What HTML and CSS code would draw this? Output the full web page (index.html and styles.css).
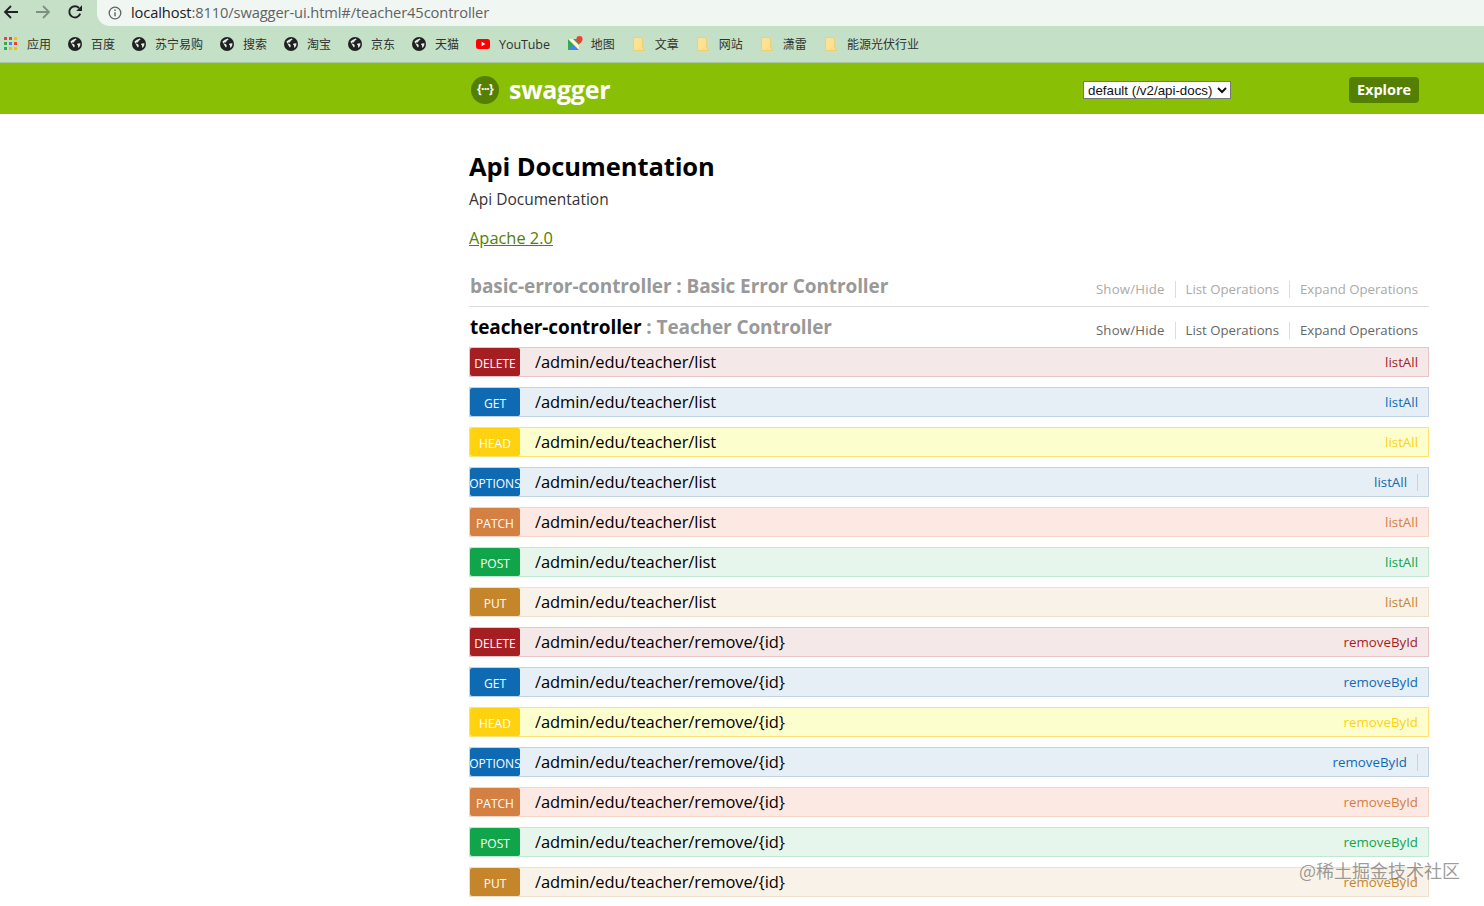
FILE: index.html
```html
<!DOCTYPE html>
<html lang="zh">
<head>
<meta charset="utf-8">
<title>Swagger UI</title>
<link rel="stylesheet" href="styles.css">
</head>
<body>
<svg class="defs" width="0" height="0" aria-hidden="true">
  <symbol id="globe" viewBox="0 0 14 14">
    <circle cx="7" cy="7" r="7" fill="#1f2120"/>
    <path d="M2.400 4.400 4.800 2.800 7.800 1.600 8.600 2.600 6.800 3.800 5.800 5.400 4 5.400 3.800 6.600 5.800 7 6.800 8.400 6.200 10.400 5.400 10 4.400 8.200Z" fill="#e4ece5"/>
    <path d="M9.600 6.400 12.400 6.200 12.300 8.200 11 10.600 10.200 10.800 10 8.600 9 7.400Z" fill="#e4ece5"/>
  </symbol>
  <symbol id="folder" viewBox="0 0 14 14">
    <path d="M1.500.5H10L11 12 12.500 13.500H1.500Z" fill="#fde293" stroke="#f2cf6c"/>
  </symbol>
</svg>

<div class="toolbar">
  <div class="nav">
    <svg class="nav-icon" viewBox="0 0 16 16"><path d="M15 8H2M8 2 2 8l6 6" fill="none" stroke="#202124" stroke-width="1.8"/></svg>
    <svg class="nav-icon" viewBox="0 0 16 16"><path d="M1 8h13M8 2l6 6-6 6" fill="none" stroke="#7f8f82" stroke-width="1.8"/></svg>
    <svg class="nav-icon" viewBox="0 0 16 16"><path d="M13.200 9.600A5.600 5.600 0 1 1 12 4" fill="none" stroke="#202124" stroke-width="1.900"/><path d="M15 1.200V7H9.200Z" fill="#202124"/></svg>
  </div>
  <div class="omnibox">
    <svg class="info" viewBox="0 0 14 14"><circle cx="7" cy="7" r="5.800" fill="none" stroke="#5f6368" stroke-width="1.300"/><path d="M7 6.200v4M7 3.600v1.400" stroke="#5f6368" stroke-width="1.400"/></svg>
    <span class="url"><span class="url-host">localhost</span>:8110/swagger-ui.html#/teacher45controller</span>
  </div>
</div>

<div class="bookmarks">
  <span class="bm">
    <svg class="bm-icon" viewBox="0 0 14 14">
      <rect width="3" height="3" x="0" y="0" fill="#ea4335"/><rect width="3" height="3" x="5" y="0" fill="#ea4335"/><rect width="3" height="3" x="10" y="0" fill="#fbbc05"/>
      <rect width="3" height="3" x="0" y="5" fill="#34a853"/><rect width="3" height="3" x="5" y="5" fill="#4285f4"/><rect width="3" height="3" x="10" y="5" fill="#ea4335"/>
      <rect width="3" height="3" x="0" y="10" fill="#34a853"/><rect width="3" height="3" x="5" y="10" fill="#fbbc05"/><rect width="3" height="3" x="10" y="10" fill="#fbbc05"/>
    </svg>应用</span>
  <span class="bm"><svg class="bm-icon"><use href="#globe"/></svg>百度</span>
  <span class="bm"><svg class="bm-icon"><use href="#globe"/></svg>苏宁易购</span>
  <span class="bm"><svg class="bm-icon"><use href="#globe"/></svg>搜索</span>
  <span class="bm"><svg class="bm-icon"><use href="#globe"/></svg>淘宝</span>
  <span class="bm"><svg class="bm-icon"><use href="#globe"/></svg>京东</span>
  <span class="bm"><svg class="bm-icon"><use href="#globe"/></svg>天猫</span>
  <span class="bm bm-yt">
    <svg class="bm-icon" viewBox="0 0 14 14"><rect y="2" width="14" height="10" rx="2.500" fill="#f00"/><path d="M5.600 4.800v4.400L9.400 7Z" fill="#fff"/></svg>YouTube</span>
  <span class="bm">
    <svg class="bm-icon maps" viewBox="0 0 16 16">
      <path d="M1 3h11v11H1Z" fill="#34a853"/>
      <path d="M1 14 7 8l5 6Z" fill="#4285f4"/>
      <path d="M1 3l11 11V9L6 3Z" fill="#fdf3d0"/>
      <path d="M12.500 0A3.200 3.200 0 0 0 9.400 3.200C9.400 5.400 12.500 8 12.500 8S15.600 5.400 15.600 3.200A3.200 3.200 0 0 0 12.500 0Z" fill="#ea4335"/>
    </svg>地图</span>
  <span class="bm"><svg class="bm-icon"><use href="#folder"/></svg>文章</span>
  <span class="bm"><svg class="bm-icon"><use href="#folder"/></svg>网站</span>
  <span class="bm"><svg class="bm-icon"><use href="#folder"/></svg>潇雷</span>
  <span class="bm"><svg class="bm-icon"><use href="#folder"/></svg>能源光伏行业</span>
</div>

<header class="swagger-header">
  <div class="swagger-inner">
    <div class="logo">
      <span class="logo-mark">{···}</span>
      <span class="logo-text">swagger</span>
    </div>
    <select class="spec-select"><option>default (/v2/api-docs)</option></select>
    <button class="explore" type="button">Explore</button>
  </div>
</header>

<main class="content">
  <h1 class="title">Api Documentation</h1>
  <p class="desc">Api Documentation</p>
  <a class="license" href="#">Apache 2.0</a>

  <section class="resource resource-closed">
    <h2 class="res-title"><span class="res-name">basic-error-controller</span> : Basic Error Controller</h2>
    <ul class="res-links"><li>Show/Hide</li><li>List Operations</li><li>Expand Operations</li></ul>
  </section>

  <section class="resource resource-open">
    <h2 class="res-title"><span class="res-name">teacher-controller</span> : Teacher Controller</h2>
    <ul class="res-links"><li>Show/Hide</li><li>List Operations</li><li>Expand Operations</li></ul>
  </section>

  <div class="ops">
    <div class="op delete"><span class="method">DELETE</span><span class="path">/admin/edu/teacher/list</span><span class="nick">listAll</span></div>
    <div class="op get"><span class="method">GET</span><span class="path">/admin/edu/teacher/list</span><span class="nick">listAll</span></div>
    <div class="op head"><span class="method">HEAD</span><span class="path">/admin/edu/teacher/list</span><span class="nick">listAll</span></div>
    <div class="op options"><span class="method">OPTIONS</span><span class="path">/admin/edu/teacher/list</span><span class="nick">listAll</span></div>
    <div class="op patch"><span class="method">PATCH</span><span class="path">/admin/edu/teacher/list</span><span class="nick">listAll</span></div>
    <div class="op post"><span class="method">POST</span><span class="path">/admin/edu/teacher/list</span><span class="nick">listAll</span></div>
    <div class="op put"><span class="method">PUT</span><span class="path">/admin/edu/teacher/list</span><span class="nick">listAll</span></div>
    <div class="op delete"><span class="method">DELETE</span><span class="path">/admin/edu/teacher/remove/{id}</span><span class="nick">removeById</span></div>
    <div class="op get"><span class="method">GET</span><span class="path">/admin/edu/teacher/remove/{id}</span><span class="nick">removeById</span></div>
    <div class="op head"><span class="method">HEAD</span><span class="path">/admin/edu/teacher/remove/{id}</span><span class="nick">removeById</span></div>
    <div class="op options"><span class="method">OPTIONS</span><span class="path">/admin/edu/teacher/remove/{id}</span><span class="nick">removeById</span></div>
    <div class="op patch"><span class="method">PATCH</span><span class="path">/admin/edu/teacher/remove/{id}</span><span class="nick">removeById</span></div>
    <div class="op post"><span class="method">POST</span><span class="path">/admin/edu/teacher/remove/{id}</span><span class="nick">removeById</span></div>
    <div class="op put"><span class="method">PUT</span><span class="path">/admin/edu/teacher/remove/{id}</span><span class="nick">removeById</span></div>
  </div>
</main>

<div class="watermark">@稀土掘金技术社区</div>
</body>
</html>
```
FILE: styles.css
```css
* { box-sizing: border-box; }
html, body { margin: 0; height: 906px; overflow: hidden; background: #fff; }
body { font-family: "Open Sans", "Noto Sans CJK SC", sans-serif; color: #000; position: relative; }
.defs { position: absolute; }

.toolbar { height: 26px; background: #c6e0c8; display: flex; }
.nav { width: 97px; display: flex; gap: 16px; padding: 4px 0 0 3px; }
.nav-icon { width: 16px; height: 16px; }
.omnibox { flex: 1; background: #f0f6f1; border-bottom-left-radius: 13px; display: flex; align-items: center; padding-left: 11px; gap: 9px; margin-top: -1px; height: 27px; }
.info { width: 14px; height: 14px; }
.url { font: 14.7px/20px "Open Sans", sans-serif; color: #5f6368; letter-spacing: -.12px; margin-top: -1px; }
.url-host { color: #202124; }

.bookmarks { height: 37px; background: #c4e0c6; border-bottom: 1px solid #a9c7a3; display: flex; align-items: center; gap: 17px; padding: 0 0 0 4px; }
.bm { display: flex; align-items: center; gap: 9px; font: 12px/16px "Noto Sans CJK SC", "Open Sans", sans-serif; color: #30332f; white-space: nowrap; }
.bm-icon { width: 14px; height: 14px; flex: none; }
.bm-yt { font: 12.5px/16px "Open Sans", sans-serif; padding-top: 2px; letter-spacing: -.1px; }
.bm-yt .bm-icon { margin-top: -2px; }
.maps { width: 16px; height: 16px; margin-right: -1px; }

.swagger-header { height: 51px; background: #89bf04; }
.swagger-inner { width: 960px; margin-left: 469px; height: 100%; display: flex; align-items: center; padding-top: 3px; }
.logo { display: flex; align-items: center; gap: 10px; width: 614px; padding-left: 2px; }
.logo-mark { width: 28px; height: 28px; border-radius: 50%; background: #547f00; color: #fff; font: 700 12px/26px "Open Sans", sans-serif; text-align: center; letter-spacing: -.7px; }
.logo-text { font: 700 25px/30px "Open Sans", sans-serif; color: #fff; letter-spacing: -.3px; margin-top: -3px; }
.spec-select { width: 148px; height: 18px; font: 13.33px "Liberation Sans", sans-serif; background: #fff; color: #111; border: 1px solid #767676; padding: 0; }
.explore { margin-left: 118px; width: 70px; height: 26px; border: 0; border-radius: 4px; background: #547f00; color: #fff; font: 700 14.5px/26px "Open Sans", sans-serif; padding: 0; }

.content { width: 960px; margin-left: 469px; }
.title { margin: 0; padding-top: 34px; font: 700 25.5px/36px "Open Sans", sans-serif; letter-spacing: -.1px; }
.desc { margin: 3px 0 0; font: 15.5px/24px "Open Sans", sans-serif; color: #333; }
.license { display: block; margin-top: 15px; font: 16.4px/24px "Open Sans", sans-serif; color: #547f00; text-decoration: underline; width: max-content; }

.resource { display: flex; align-items: flex-end; justify-content: space-between; padding: 0 11px 0 1px; }
.resource-closed { margin-top: 15px; height: 42px; padding-bottom: 6px; border-bottom: 1px solid #ddd; }
.resource-open { height: 40px; padding-bottom: 6px; }
.res-title { margin: 0; font: 700 19px/28px "Open Sans", sans-serif; color: #999; letter-spacing: -.1px; }
.resource-open .res-name { color: #000; }
.res-links { list-style: none; margin: 0 0 2px; padding: 0; display: flex; font: 13.2px/17px "Open Sans", sans-serif; color: #666; }
.resource-closed .res-links { color: #aaa; }
.res-links li { padding: 0 10px; border-right: 1px solid #ddd; }
.res-links li:first-child { letter-spacing: .2px; }
.res-links li:last-child { padding-right: 0; border-right: 0; }

.ops { display: flex; flex-direction: column; gap: 10px; }
.op { height: 30px; border: 1px solid; display: flex; align-items: center; }
.method { width: 50px; height: 28px; flex: none; border-radius: 2px; color: #fff; font: 12px/31px "Open Sans", sans-serif; text-align: center; overflow: hidden; white-space: nowrap; display: flex; justify-content: center; }
.path { margin-left: 15px; flex: 1; font: 16.5px/26px "Open Sans", sans-serif; color: #000; letter-spacing: -.08px; }
.nick { padding-right: 10px; font: 13.3px/20px "Open Sans", sans-serif; }

.delete { background: #f5e8e8; border-color: #e8c6c7; }
.delete .method { background: #a41e22; }
.delete .nick { color: #a41e22; }
.get { background: #e7eff6; border-color: #c3d5e5; }
.get .method { background: #0f6ab4; }
.get .nick { color: #0f6ab4; }
.head { background: #fcffcd; border-color: #ffe173; }
.head .method { background: #ffd20f; }
.head .nick { color: #ffd20f; }
.options { background: #e7eff6; border-color: #c3d5e5; }
.options .method { background: #0f6ab4; }
.options .nick { color: #0f6ab4; padding-right: 10px; margin-right: 10px; border-right: 1px solid #c3d5e5; height: 17px; line-height: 17px; }
.patch { background: #fce9e3; border-color: #f5d5c3; }
.patch .method { background: #d38042; }
.patch .nick { color: #d38042; }
.post { background: #e7f6ec; border-color: #c3e8d1; }
.post .method { background: #10a54a; }
.post .nick { color: #10a54a; }
.put { background: #f9f2e9; border-color: #f0e0ca; }
.put .method { background: #c5862b; }
.put .nick { color: #c5862b; }

.watermark { position: absolute; left: 1299px; top: 857px; font: 18px/26px "Noto Sans CJK SC", sans-serif; color: rgba(90, 90, 90, .6); white-space: nowrap; }
```
